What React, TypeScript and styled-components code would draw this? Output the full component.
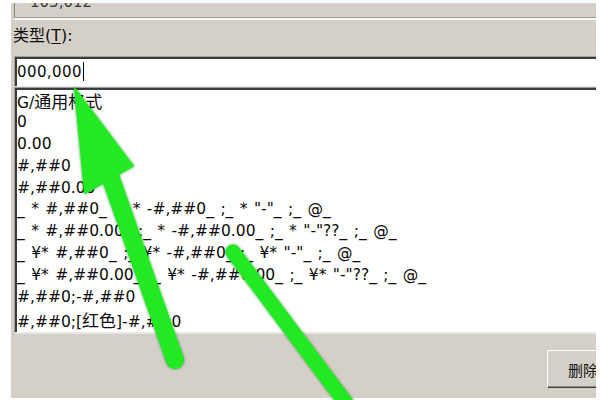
import React from 'react';
import styled, { createGlobalStyle } from 'styled-components';

// classic dialog grey (#D4D0C8), sunken frames dark (#3C3C3C)

const GlobalStyle = createGlobalStyle`
  html, body {
    margin: 0;
    padding: 0;
    background: #fff;
  }
  body {
    overflow: hidden;
  }
`;

const Screen = styled.div`
  position: relative;
  width: 600px;
  height: 400px;
  box-sizing: border-box;
  padding: 3px 4px 2px 11px;
  background: #fff;
`;

const Dialog = styled.div`
  height: 100%;
  display: flex;
  flex-direction: column;
  overflow: hidden;
  background: #d4d0c8;
  color: #0a0a0a;
  font-family: "DejaVu Sans", "Noto Sans CJK SC", sans-serif;
`;

const Sample = styled.div`
  flex: none;
  height: 14px;
  margin: 0 -30px 0 3px;
  padding-left: 15px;
  overflow: hidden;
  border-left: 1px solid #8c8882;
  border-bottom: 1px solid #9c9892;
  box-shadow: 0 2px 0 #fbfbf8;
  font-size: 15px;
  line-height: 15px;
  color: #3a3a3a;
`;

const SampleValue = styled.div`
  margin-top: -8px;
`;

const FieldLabel = styled.div`
  flex: none;
  padding: 7px 0 9px 2px;
  font-size: 16px;
  line-height: 22px;

  u {
    text-underline-offset: 2px;
  }
`;

const TypeInput = styled.div`
  flex: none;
  height: 29px;
  margin: 0 -30px 0 3px;
  padding-left: 2px;
  display: flex;
  align-items: center;
  background: #fff;
  border-top: 1px solid #a29e98;
  border-left: 1px solid #a29e98;
  border-bottom: 1px solid #e6e5e1;
  box-shadow: inset 2px 2px 0 #3c3c3c;
  font-size: 15px;
  letter-spacing: 0.4px;
`;

const Caret = styled.span`
  width: 1px;
  height: 19px;
  margin-left: 1px;
  background: #000;
`;

const FormatList = styled.div`
  flex: none;
  height: 241px;
  margin: 0 -30px 0 3px;
  padding: 2px 0 1px 2px;
  background: #fff;
  border-top: 1px solid #a29e98;
  border-left: 1px solid #a29e98;
  border-bottom: 2px solid #e8e7e3;
  box-shadow: inset 2px 2px 0 #3c3c3c;
`;

const FormatRow = styled.div`
  height: 21.9px;
  line-height: 21.9px;
  font-size: 15.5px;
  word-spacing: 1.5px;
  white-space: pre;
`;

const Han = styled.span`
  font-family: "Noto Sans CJK SC", sans-serif;
  font-size: 17px;
`;

const Footer = styled.div`
  flex: 1;
  display: flex;
  justify-content: flex-end;
  align-items: flex-start;
  padding-top: 16px;
`;

const DeleteButton = styled.button`
  width: 85px;
  height: 38px;
  margin-right: -36px;
  padding: 0 0 0 20px;
  text-align: left;
  background: #d4d0c8;
  border: 1px solid;
  border-color: #fff #404040 #404040 #fff;
  box-shadow: inset -1px -1px 0 #8a8680;
  font: 15px "Noto Sans CJK SC", sans-serif;
  color: #111;
`;

const Annotations = styled.svg`
  position: absolute;
  left: 0;
  top: 0;
  width: 600px;
  height: 400px;
  pointer-events: none;
`;

const formats = [
  'G/通用格式',
  '0',
  '0.00',
  '#,##0',
  '#,##0.00',
  '_ * #,##0_ ;_ * -#,##0_ ;_ * "-"_ ;_ @_',
  '_ * #,##0.00_ ;_ * -#,##0.00_ ;_ * "-"??_ ;_ @_',
  '_ ¥* #,##0_ ;_ ¥* -#,##0_ ;_ ¥* "-"_ ;_ @_',
  '_ ¥* #,##0.00_ ;_ ¥* -#,##0.00_ ;_ ¥* "-"??_ ;_ @_',
  '#,##0;-#,##0',
  '#,##0;[红色]-#,##0',
];

const renderFormat = (text: string) =>
  text.split(/([\u4e00-\u9fff]+)/).map((part, i) =>
    /[\u4e00-\u9fff]/.test(part) ? <Han key={i}>{part}</Han> : part
  );

const App = () => {
  return (
    <Screen>
      <GlobalStyle />
      <Dialog>
        <Sample>
          <SampleValue>103,012</SampleValue>
        </Sample>
        <FieldLabel>
          类型(<u>T</u>):
        </FieldLabel>
        <TypeInput>
          000,000
          <Caret />
        </TypeInput>
        <FormatList>
          {formats.map((f) => (
            <FormatRow key={f}>{renderFormat(f)}</FormatRow>
          ))}
        </FormatList>
        <Footer>
          <DeleteButton>删除</DeleteButton>
        </Footer>
      </Dialog>

      <Annotations viewBox="0 0 600 400">
        <defs>
          <filter id="marker-glow" x="-30%" y="-30%" width="160%" height="160%">
            <feGaussianBlur in="SourceAlpha" stdDeviation="1.8" result="blur" />
            <feFlood floodColor="#0a5a0a" floodOpacity="0.65" />
            <feComposite in2="blur" operator="in" result="shadow" />
            <feGaussianBlur in="SourceGraphic" stdDeviation="0.4" result="soft" />
            <feMerge>
              <feMergeNode in="shadow" />
              <feMergeNode in="soft" />
            </feMerge>
          </filter>
        </defs>
        <g filter="url(#marker-glow)" fill="#22ea22" stroke="#22ea22">
          <line x1="110" y1="176" x2="175" y2="360" strokeWidth="18" strokeLinecap="round" />
          <polygon points="75,89 133,166 85,193" strokeWidth="2" strokeLinejoin="round" />
          <line x1="233" y1="252" x2="357" y2="418" strokeWidth="15" strokeLinecap="round" />
        </g>
      </Annotations>
    </Screen>
  );
};

export default App;
